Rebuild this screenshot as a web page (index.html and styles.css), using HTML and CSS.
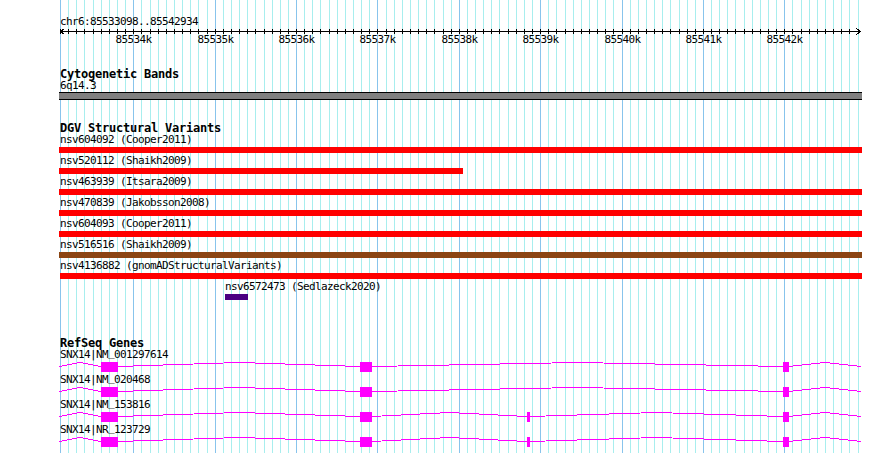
FILE: index.html
```html
<!DOCTYPE html>
<html lang="en">
  <head>
    <meta charset="UTF-8" />
    <meta name="viewport" content="width=device-width, initial-scale=1.0" />
    <title>chr6:85533098..85542934</title>
    <link rel="stylesheet" href="styles.css">
  </head>
  <body>
    <div class="browser">
      <!-- background grid, filled in by script.js -->
      <svg class="grid" id="grid" width="890" height="453"></svg>

      <div class="tracks">
        <!-- Ruler -->
        <div class="ruler">
          <div class="feature-label">chr6:85533098..85542934</div>
          <svg class="axis" id="axis" width="806" height="18">
            <line class="tick" x1="0.5" y1="3.5" x2="800.5" y2="3.5" />
            <polyline class="tick arrow" points="4.5,0.5 0.5,3.5 4.5,6.5" />
            <polyline class="tick arrow" points="796.5,0.5 800.5,3.5 796.5,6.5" />
          </svg>
        </div>

        <!-- Cytogenetic Bands -->
        <div class="track">
          <h2 class="track-title">Cytogenetic Bands</h2>
          <div class="feature-label">6q14.3</div>
          <div class="band" style="margin-left:-1px;width:803px"></div>
        </div>

        <!-- DGV Structural Variants -->
        <div class="track track-dgv">
          <h2 class="track-title">DGV Structural Variants</h2>
          <div class="sv-list">
            <div class="sv-row">
              <div class="feature-label">nsv604092 (Cooper2011)</div>
              <div class="bar loss" style="margin-left:-1px;width:803px"></div>
            </div>
            <div class="sv-row">
              <div class="feature-label">nsv520112 (Shaikh2009)</div>
              <div class="bar loss" style="margin-left:-1px;width:404px"></div>
            </div>
            <div class="sv-row">
              <div class="feature-label">nsv463939 (Itsara2009)</div>
              <div class="bar loss" style="margin-left:-1px;width:803px"></div>
            </div>
            <div class="sv-row">
              <div class="feature-label">nsv470839 (Jakobsson2008)</div>
              <div class="bar loss" style="margin-left:-1px;width:803px"></div>
            </div>
            <div class="sv-row">
              <div class="feature-label">nsv604093 (Cooper2011)</div>
              <div class="bar loss" style="margin-left:-1px;width:803px"></div>
            </div>
            <div class="sv-row">
              <div class="feature-label">nsv516516 (Shaikh2009)</div>
              <div class="bar gain-loss" style="margin-left:-1px;width:803px"></div>
            </div>
            <div class="sv-row">
              <div class="feature-label">nsv4136882 (gnomADStructuralVariants)</div>
              <div class="bar loss" style="width:802px"></div>
            </div>
            <div class="sv-row" style="margin-left:165px">
              <div class="feature-label">nsv6572473 (Sedlazeck2020)</div>
              <div class="bar inversion" style="width:23px"></div>
            </div>
          </div>
        </div>

        <!-- RefSeq Genes -->
        <div class="track">
          <h2 class="track-title">RefSeq Genes</h2>

          <div class="gene">
            <div class="feature-label">SNX14|NM<span class="us">_</span>001297614</div>
            <svg class="gene-model" width="803" height="10">
              <polyline class="intron" points="0,4.5 21,0.5 42,4.5" />
              <polyline class="intron" points="59,4.5 180,0.5 301,4.5" />
              <polyline class="intron" points="313,4.5 518.5,0.5 724,4.5" />
              <polyline class="intron" points="730,4.5 766,0.5 802,4.5" />
              <rect class="exon" x="42" y="0" width="17" height="10" />
              <rect class="exon" x="301" y="0" width="12" height="10" />
              <rect class="exon" x="724" y="0" width="6" height="10" />
            </svg>
          </div>

          <div class="gene">
            <div class="feature-label">SNX14|NM<span class="us">_</span>020468</div>
            <svg class="gene-model" width="803" height="10">
              <polyline class="intron" points="0,4.5 21,0.5 42,4.5" />
              <polyline class="intron" points="59,4.5 180,0.5 301,4.5" />
              <polyline class="intron" points="313,4.5 518.5,0.5 724,4.5" />
              <polyline class="intron" points="730,4.5 766,0.5 802,4.5" />
              <rect class="exon" x="42" y="0" width="17" height="10" />
              <rect class="exon" x="301" y="0" width="12" height="10" />
              <rect class="exon" x="724" y="0" width="6" height="10" />
            </svg>
          </div>

          <div class="gene">
            <div class="feature-label">SNX14|NM<span class="us">_</span>153816</div>
            <svg class="gene-model" width="803" height="10">
              <polyline class="intron" points="0,4.5 21,0.5 42,4.5" />
              <polyline class="intron" points="59,4.5 180,0.5 301,4.5" />
              <polyline class="intron" points="313,4.5 390.5,0.5 468,4.5" />
              <polyline class="intron" points="471,4.5 597.5,0.5 724,4.5" />
              <polyline class="intron" points="730,4.5 766,0.5 802,4.5" />
              <rect class="exon" x="42" y="0" width="17" height="10" />
              <rect class="exon" x="301" y="0" width="12" height="10" />
              <rect class="exon" x="468" y="0" width="3" height="10" />
              <rect class="exon" x="724" y="0" width="6" height="10" />
            </svg>
          </div>

          <div class="gene">
            <div class="feature-label">SNX14|NR<span class="us">_</span>123729</div>
            <svg class="gene-model" width="803" height="10">
              <polyline class="intron" points="0,4.5 21,0.5 42,4.5" />
              <polyline class="intron" points="59,4.5 180,0.5 301,4.5" />
              <polyline class="intron" points="313,4.5 390.5,0.5 468,4.5" />
              <polyline class="intron" points="471,4.5 597.5,0.5 724,4.5" />
              <polyline class="intron" points="730,4.5 766,0.5 802,4.5" />
              <rect class="exon" x="42" y="0" width="17" height="10" />
              <rect class="exon" x="301" y="0" width="12" height="10" />
              <rect class="exon" x="468" y="0" width="3" height="10" />
              <rect class="exon" x="724" y="0" width="6" height="10" />
            </svg>
          </div>
        </div>
      </div>
    </div>

    <script src="script.js"></script>
  </body>
</html>
```

FILE: styles.css
```css
/* Page */
body {
  margin: 0;
  background-color: #ffffff;
  color: #000000;
}

/* Image panel */
.browser {
  position: relative;
  width: 890px;
  height: 453px;
  overflow: hidden;
  background-color: #ffffff;
}

.grid {
  position: absolute;
  top: 0;
  left: 0;
}

.grid line {
  stroke-width: 1;
  shape-rendering: crispEdges;
}

.grid-minor {
  stroke: #a8eeee;
}

.grid-major {
  stroke: #88c4ec;
}

.tracks {
  position: relative;
  padding-left: 60px;
}

/* Text */
.feature-label {
  font-family: "DejaVu Sans Mono", monospace;
  font-size: 11px;
  line-height: 12px;
  letter-spacing: -0.62px;
  white-space: nowrap;
}

.feature-label .us {
  position: relative;
  top: -2px;
}

.track-title {
  margin: 0;
  font-family: "DejaVu Sans Mono", monospace;
  font-size: 12px;
  font-weight: bold;
  line-height: 12px;
  letter-spacing: -0.22px;
  white-space: nowrap;
}

/* Ruler */
.ruler {
  padding-top: 16px;
}

.axis {
  display: block;
  overflow: visible;
}

.tick {
  stroke: #000000;
  stroke-width: 1;
  fill: none;
  shape-rendering: crispEdges;
}

.tick-label {
  font-family: "DejaVu Sans Mono", monospace;
  font-size: 11px;
  letter-spacing: -0.62px;
  fill: #000000;
}

/* Tracks */
.track {
  padding-top: 22px;
}

.track-dgv {
  padding-bottom: 13px;
}

.band {
  height: 6px;
  background-color: #808080;
  border-top: 1px solid #000000;
  border-bottom: 1px solid #000000;
}

.sv-row {
  height: 21px;
}

.bar {
  height: 6px;
  margin-top: 1px;
}

.bar.loss {
  background-color: #ff0000;
}

.bar.gain-loss {
  background-color: #8b4513;
}

.bar.inversion {
  background-color: #4b0082;
}

/* Gene models */
.gene {
  height: 25px;
}

.gene-model {
  display: block;
  margin-top: 1px;
  margin-left: -1px;
}

.intron {
  fill: none;
  stroke: #ff00ff;
  stroke-width: 1;
  shape-rendering: crispEdges;
}

.exon {
  fill: #ff00ff;
}
```

FILE: script.js
```js
// Draws the background grid and the ruler ticks for the visible region.
const REGION_START = 85533098;
const REGION_END = 85542934;
const PX_LEFT = 59.9; // panel x of REGION_START
const PX_PER_BP = 0.081375;
const AXIS_LEFT = 60; // panel x of the axis svg
const SVG_NS = "http://www.w3.org/2000/svg";

function bpToColumn(pos) {
  return Math.round(PX_LEFT + (pos - REGION_START) * PX_PER_BP);
}

function addLine(svg, x1, y1, x2, y2, className) {
  const line = document.createElementNS(SVG_NS, "line");
  line.setAttribute("x1", x1);
  line.setAttribute("y1", y1);
  line.setAttribute("x2", x2);
  line.setAttribute("y2", y2);
  line.setAttribute("class", className);
  svg.appendChild(line);
}

const grid = document.getElementById("grid");
const axis = document.getElementById("axis");

for (let pos = Math.ceil(REGION_START / 100) * 100; pos <= REGION_END; pos += 100) {
  const col = bpToColumn(pos);
  const major = pos % 1000 === 0;

  addLine(grid, col + 0.5, 0, col + 0.5, 453, major ? "grid-major" : "grid-minor");

  // small tick on the ruler for every grid line
  const ax = col - AXIS_LEFT + 0.5;
  addLine(axis, ax, 1, ax, 6, "tick");

  if (major) {
    const label = document.createElementNS(SVG_NS, "text");
    label.setAttribute("x", ax);
    label.setAttribute("y", 15);
    label.setAttribute("text-anchor", "middle");
    label.setAttribute("class", "tick-label");
    label.textContent = pos / 1000 + "k";
    axis.appendChild(label);
  }
}

// left edge of the panel
addLine(grid, AXIS_LEFT + 0.5, 0, AXIS_LEFT + 0.5, 453, "grid-major");
```
